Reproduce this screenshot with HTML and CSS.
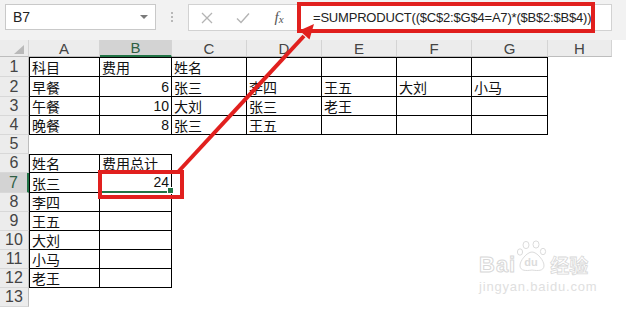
FILE: index.html
```html
<!DOCTYPE html>
<html lang="zh-CN">
<head>
	<meta charset="UTF-8">
	<title>SUMPRODUCT</title>
	<link rel="stylesheet" href="styles.css">
</head>
<body>
	<div class="page">
		<!-- barra de formulas -->
		<div class="toolbar">
			<div class="namebox"><span>B7</span><i class="caret"></i></div>
			<div class="grip"><i></i><i></i><i></i></div>
			<div class="fbar">
				<span class="fbtn">
					<svg width="12" height="12" viewBox="0 0 12 12"><path d="M1 1 L11 11 M11 1 L1 11" stroke="#b4b4b4" stroke-width="1.3" fill="none"/></svg>
				</span>
				<span class="fbtn">
					<svg width="14" height="12" viewBox="0 0 14 12"><path d="M1 6.5 L5 10.5 L13 1.5" stroke="#b4b4b4" stroke-width="1.4" fill="none"/></svg>
				</span>
				<span class="fbtn fx"><i>f</i><i class="x">x</i></span>
				<span class="formula">=SUMPRODUCT(($C$2:$G$4=A7)*($B$2:$B$4))</span>
			</div>
		</div>

		<!-- hoja -->
		<div class="sheet">
			<div class="h corner"><i></i></div>
			<div class="h">A</div>
			<div class="h sel">B</div>
			<div class="h">C</div>
			<div class="h">D</div>
			<div class="h">E</div>
			<div class="h">F</div>
			<div class="h">G</div>
			<div class="h">H</div>

			<div class="r">1</div>
			<div class="c t l top">科目</div>
			<div class="c t top">费用</div>
			<div class="c t top">姓名</div>
			<div class="c t top"></div>
			<div class="c t top"></div>
			<div class="c t top"></div>
			<div class="c t top"></div>
			<div class="c"></div>

			<div class="r">2</div>
			<div class="c t l">早餐</div>
			<div class="c t n">6</div>
			<div class="c t">张三</div>
			<div class="c t">李四</div>
			<div class="c t">王五</div>
			<div class="c t">大刘</div>
			<div class="c t">小马</div>
			<div class="c"></div>

			<div class="r">3</div>
			<div class="c t l">午餐</div>
			<div class="c t n">10</div>
			<div class="c t">大刘</div>
			<div class="c t">张三</div>
			<div class="c t">老王</div>
			<div class="c t"></div>
			<div class="c t"></div>
			<div class="c"></div>

			<div class="r">4</div>
			<div class="c t l">晚餐</div>
			<div class="c t n">8</div>
			<div class="c t">张三</div>
			<div class="c t">王五</div>
			<div class="c t"></div>
			<div class="c t"></div>
			<div class="c t"></div>
			<div class="c"></div>

			<div class="r">5</div>
			<div class="c rest8"></div>

			<div class="r">6</div>
			<div class="c t l top">姓名</div>
			<div class="c t top">费用总计</div>
			<div class="c rest6"></div>

			<div class="r sel">7</div>
			<div class="c t l">张三</div>
			<div class="c t n active">24</div>
			<div class="c rest6"></div>

			<div class="r">8</div>
			<div class="c t l">李四</div>
			<div class="c t"></div>
			<div class="c rest6"></div>

			<div class="r">9</div>
			<div class="c t l">王五</div>
			<div class="c t"></div>
			<div class="c rest6"></div>

			<div class="r">10</div>
			<div class="c t l">大刘</div>
			<div class="c t"></div>
			<div class="c rest6"></div>

			<div class="r">11</div>
			<div class="c t l">小马</div>
			<div class="c t"></div>
			<div class="c rest6"></div>

			<div class="r">12</div>
			<div class="c t l">老王</div>
			<div class="c t"></div>
			<div class="c rest6"></div>

			<div class="r">13</div>
			<div class="c rest8"></div>
		</div>

		<!-- marca de agua -->
		<div class="mark">
			<div class="logo">
				<span class="bai">Bai</span>
				<span class="paw">
					<svg width="32" height="36" viewBox="0 0 32 36">
						<g fill="none" stroke="#dcdcdc" stroke-width="1">
							<ellipse cx="10" cy="5" rx="3" ry="3.6"/>
							<ellipse cx="20" cy="4.5" rx="3" ry="3.6"/>
							<ellipse cx="4" cy="12" rx="2.6" ry="3.2"/>
							<ellipse cx="27" cy="11.5" rx="2.6" ry="3.2"/>
							<path d="M16 12 C11 12 3.5 21 4 26 C4.5 31 10 31 16 30 C22 31 27.5 31 28 26 C28.5 21 21 12 16 12 Z"/>
						</g>
					</svg>
					<span class="du">du</span>
				</span>
				<span class="jy">经验</span>
			</div>
			<div class="url">jingyan.baidu.com</div>
		</div>

		<!-- anotaciones -->
		<svg class="notes" width="626" height="309" viewBox="0 0 626 309">
			<g stroke="#e1201e" fill="none" stroke-width="4">
				<rect x="299" y="4" width="294" height="27"/>
				<rect x="100" y="172" width="82" height="25"/>
				<line x1="178" y1="172" x2="304" y2="36"/>
			</g>
			<polygon points="314,24 309.5,39.5 299.5,30.5" fill="#e1201e"/>
		</svg>
	</div>
</body>
</html>
```

FILE: styles.css
```css
/*page*/
body {
	margin: 0px;
	background-color: #fff;
	font-family: "Noto Sans CJK SC", sans-serif;
}
.page {
	position: relative;
	width: 626px;
	height: 309px;
	overflow: hidden;
}
/*toolbar*/
.toolbar {
	display: flex;
	align-items: flex-start;
	height: 40px;
	padding: 4px 0px 0px 5px;
	box-sizing: border-box;
	background-color: #f2f2f2;
}
.toolbar .namebox {
	width: 151px;
	height: 26px;
	box-sizing: border-box;
	background-color: #fff;
	border: 1px solid #c9c9c9;
	display: flex;
	align-items: center;
	justify-content: space-between;
	padding: 0px 7px 0px 7px;
	font: 14px "Liberation Sans", sans-serif;
	color: #222;
}
.toolbar .caret {
	border-left: 4px solid transparent;
	border-right: 4px solid transparent;
	border-top: 4px solid #7a7a7a;
}
.toolbar .grip {
	width: 32px;
	height: 26px;
	display: flex;
	flex-direction: column;
	align-items: center;
	justify-content: center;
	gap: 2px;
}
.toolbar .grip i {
	width: 2px;
	height: 2px;
	background-color: #b8b8b8;
}
.toolbar .fbar {
	width: 424px;
	height: 27px;
	box-sizing: border-box;
	background-color: #fff;
	border: 1px solid #d2d2d2;
	display: flex;
	align-items: center;
}
.toolbar .fbtn {
	width: 36px;
	display: flex;
	justify-content: center;
	align-items: center;
}
.toolbar .fx {
	font: italic 15px "Liberation Serif", serif;
	color: #555;
}
.toolbar .fx .x {
	font-size: 11px;
	margin-top: 3px;
}
.toolbar .formula {
	padding-left: 16px;
	font: 13px "Liberation Sans", sans-serif;
	letter-spacing: -0.2px;
	color: #222;
	white-space: nowrap;
}
/*sheet*/
.sheet {
	display: grid;
	width: 612px;
	grid-template-columns: 29px 71px 72px 75px 75px 75px 75px 76px 64px;
	grid-template-rows: 17px 20px 20px 19px 19px 19px 19px 20px repeat(6, 19px);
}
.sheet .h,
.sheet .r {
	background-color: #ececec;
	font: 15px "Liberation Sans", sans-serif;
	color: #444;
	display: flex;
	align-items: center;
	justify-content: center;
	box-sizing: border-box;
}
.sheet .r {
	font-size: 16px;
}
.sheet .h {
	border-right: 1px solid #d4d4d4;
	border-bottom: 1px solid #bdbdbd;
}
.sheet .r {
	border-right: 1px solid #bdbdbd;
	border-bottom: 1px solid #d8d8d8;
}
.sheet .h.sel {
	background-color: #d3d3d3;
	border-bottom: 2px solid #217346;
	color: #2f5f44;
}
.sheet .r.sel {
	background-color: #d3d3d3;
	border-right: 2px solid #217346;
	color: #2f5f44;
}
.sheet .corner {
	position: relative;
}
.sheet .corner i {
	position: absolute;
	right: 4px;
	bottom: 2px;
	border-left: 10px solid transparent;
	border-bottom: 9px solid #b9b9b9;
}
.sheet .c {
	box-sizing: border-box;
	display: flex;
	align-items: flex-end;
	padding: 0px 2px 0px 2px;
	font-size: 14px;
	line-height: 18px;
	color: #111;
	white-space: nowrap;
}
.sheet .c.t {
	border-right: 1px solid #000;
	border-bottom: 1px solid #000;
}
.sheet .c.l {
	border-left: 1px solid #000;
}
.sheet .c.top {
	border-top: 1px solid #000;
}
.sheet .c.n {
	justify-content: flex-end;
	font-family: "Liberation Sans", sans-serif;
	padding-right: 2px;
}
.sheet .rest8 {
	grid-column: span 8;
}
.sheet .rest6 {
	grid-column: span 6;
}
.sheet .c.active {
	position: relative;
	border-bottom: 2px solid #217346;
}
.sheet .c.active::after {
	content: "";
	position: absolute;
	right: -3px;
	bottom: -3px;
	width: 5px;
	height: 5px;
	background-color: #217346;
	border: 1px solid #fff;
}
/*marca de agua*/
.mark {
	position: absolute;
	left: 479px;
	top: 240px;
	width: 130px;
	color: #e2e2e2;
}
.mark .logo {
	display: flex;
	align-items: flex-end;
	height: 36px;
}
.mark .bai {
	font: bold 22px "Liberation Sans", sans-serif;
	letter-spacing: 1px;
	color: transparent;
	-webkit-text-stroke: 1px #d8d8d8;
	line-height: 22px;
}
.mark .paw {
	position: relative;
	width: 32px;
	height: 36px;
}
.mark .du {
	position: absolute;
	left: 8px;
	top: 16px;
	font: bold 11px "Liberation Sans", sans-serif;
	color: #dcdcdc;
}
.mark .jy {
	font: bold 19px "Noto Sans CJK SC", sans-serif;
	color: transparent;
	-webkit-text-stroke: 0.8px #d8d8d8;
	line-height: 22px;
	margin-left: 2px;
}
.mark .url {
	font: 13px "Liberation Sans", sans-serif;
	letter-spacing: 0.8px;
	color: #e0e0e0;
	margin-top: 3px;
}
/*anotaciones*/
.notes {
	position: absolute;
	left: 0px;
	top: 0px;
	pointer-events: none;
}
```
